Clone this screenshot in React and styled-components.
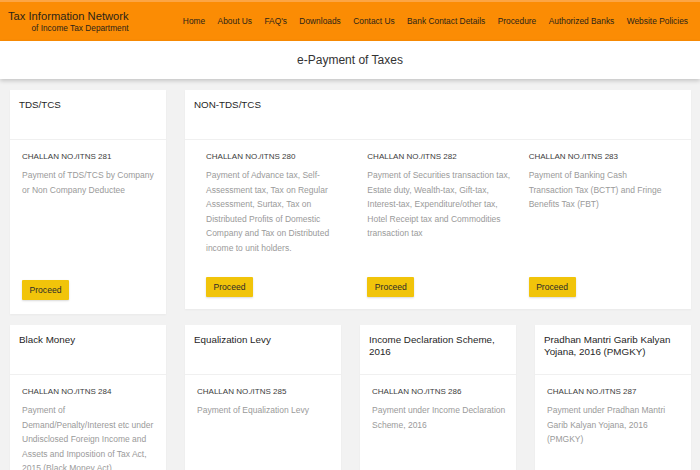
import styled, { createGlobalStyle } from 'styled-components';

const GlobalStyle = createGlobalStyle`
  html, body {
    margin: 0;
    padding: 0;
    background: #f2f2f2;
    font-family: "Liberation Sans", Arial, sans-serif;
  }
`;

const Header = styled.header`
  display: flex;
  align-items: center;
  justify-content: space-between;
  height: 41px;
  box-sizing: border-box;
  padding: 0 12px 0 8px;
  background: #fb8c04;
  border-top: 2px solid #fca544;
`;

const Logo = styled.div`
  display: flex;
  flex-direction: column;
  align-items: flex-end;
  color: #2b2418;
  margin-top: 1px;
`;

const LogoTitle = styled.span`
  font-size: 11.2px;
  line-height: 13px;
`;

const LogoSub = styled.span`
  font-size: 8.3px;
  line-height: 11px;
`;

const Nav = styled.nav`
  display: flex;
  gap: 12.4px;
  margin-top: -1px;
`;

const NavLink = styled.a`
  font-size: 8.4px;
  color: #2b2418;
  text-decoration: none;
  white-space: nowrap;
`;

const TitleBar = styled.div`
  height: 38px;
  display: flex;
  align-items: center;
  justify-content: center;
  background: #fff;
  box-shadow: 0 2px 4px rgba(0, 0, 0, 0.18);
  font-size: 12px;
  color: #333;
  position: relative;
`;

const Grid = styled.main`
  display: grid;
  grid-template-columns: repeat(4, 1fr);
  column-gap: 19px;
  row-gap: 11px;
  align-items: start;
  padding: 11px 9px 0 10px;
`;

const Card = styled.section`
  grid-column: span ${p => p.span || 1};
  background: #fff;
  box-shadow: 0 1px 2px rgba(0, 0, 0, 0.04);
`;

const CardHead = styled.h2`
  margin: 0;
  height: 50px;
  box-sizing: border-box;
  padding: 9px 9px 0;
  border-bottom: 1px solid #f0f0f0;
  font-size: 9.8px;
  line-height: 12px;
  font-weight: normal;
  color: #1f1f1f;
`;

const CardBody = styled.div`
  display: flex;
  flex-direction: column;
  box-sizing: border-box;
  min-height: ${p => p.height || 0}px;
  padding: 12px 10px ${p => p.padBottom || 12}px 12px;
`;

const Columns = styled.div`
  flex: 1;
  display: grid;
  grid-template-columns: repeat(3, 1fr);
`;

const Column = styled.div`
  display: flex;
  flex-direction: column;
  padding: 0 8px 0 9px;
`;

const Challan = styled.div`
  font-size: 8px;
  line-height: 10px;
  color: #3c3c3c;
  margin-bottom: 6px;
`;

const Desc = styled.p`
  margin: 0;
  font-size: 8.5px;
  line-height: 14.5px;
  color: #9a9a9a;
`;

const Proceed = styled.button`
  align-self: flex-start;
  margin-top: auto;
  width: 47px;
  height: 20px;
  padding: 0;
  border: none;
  border-radius: 1px;
  background: #f1c40a;
  box-shadow: 0 1px 2px rgba(0, 0, 0, 0.15);
  font-family: inherit;
  font-size: 8.6px;
  color: #2b2b2b;
`;

const navItems = [
  'Home', 'About Us', "FAQ's", 'Downloads', 'Contact Us',
  'Bank Contact Details', 'Procedure', 'Authorized Banks', 'Website Policies',
];

const nonTds = [
  {
    no: 280,
    text: 'Payment of Advance tax, Self-Assessment tax, Tax on Regular Assessment, Surtax, Tax on Distributed Profits of Domestic Company and Tax on Distributed income to unit holders.',
  },
  {
    no: 282,
    text: 'Payment of Securities transaction tax, Estate duty, Wealth-tax, Gift-tax, Interest-tax, Expenditure/other tax, Hotel Receipt tax and Commodities transaction tax',
  },
  {
    no: 283,
    text: 'Payment of Banking Cash Transaction Tax (BCTT) and Fringe Benefits Tax (FBT)',
  },
];

const others = [
  {
    title: 'Black Money',
    no: 284,
    text: 'Payment of Demand/Penalty/Interest etc under Undisclosed Foreign Income and Assets and Imposition of Tax Act, 2015 (Black Money Act)',
  },
  { title: 'Equalization Levy', no: 285, text: 'Payment of Equalization Levy' },
  {
    title: 'Income Declaration Scheme, 2016',
    no: 286,
    text: 'Payment under Income Declaration Scheme, 2016',
  },
  {
    title: 'Pradhan Mantri Garib Kalyan Yojana, 2016 (PMGKY)',
    no: 287,
    text: 'Payment under Pradhan Mantri Garib Kalyan Yojana, 2016 (PMGKY)',
  },
];

function App() {
  return (
    <>
      <GlobalStyle />
      <Header>
        <Logo>
          <LogoTitle>Tax Information Network</LogoTitle>
          <LogoSub>of Income Tax Department</LogoSub>
        </Logo>
        <Nav>
          {navItems.map(item => (
            <NavLink key={item} href="#">{item}</NavLink>
          ))}
        </Nav>
      </Header>

      <TitleBar>e-Payment of Taxes</TitleBar>

      <Grid>
        <Card>
          <CardHead>TDS/TCS</CardHead>
          <CardBody height={174} padBottom={14}>
            <Challan>CHALLAN NO./ITNS 281</Challan>
            <Desc>Payment of TDS/TCS by Company or Non Company Deductee</Desc>
            <Proceed>Proceed</Proceed>
          </CardBody>
        </Card>

        <Card span={3}>
          <CardHead>NON-TDS/TCS</CardHead>
          <CardBody height={169}>
            <Columns>
              {nonTds.map(item => (
                <Column key={item.no}>
                  <Challan>CHALLAN NO./ITNS {item.no}</Challan>
                  <Desc>{item.text}</Desc>
                  <Proceed>Proceed</Proceed>
                </Column>
              ))}
            </Columns>
          </CardBody>
        </Card>

        {others.map(item => (
          <Card key={item.no}>
            <CardHead>{item.title}</CardHead>
            <CardBody height={190}>
              <Challan>CHALLAN NO./ITNS {item.no}</Challan>
              <Desc>{item.text}</Desc>
              <Proceed>Proceed</Proceed>
            </CardBody>
          </Card>
        ))}
      </Grid>
    </>
  );
}

export default App;
